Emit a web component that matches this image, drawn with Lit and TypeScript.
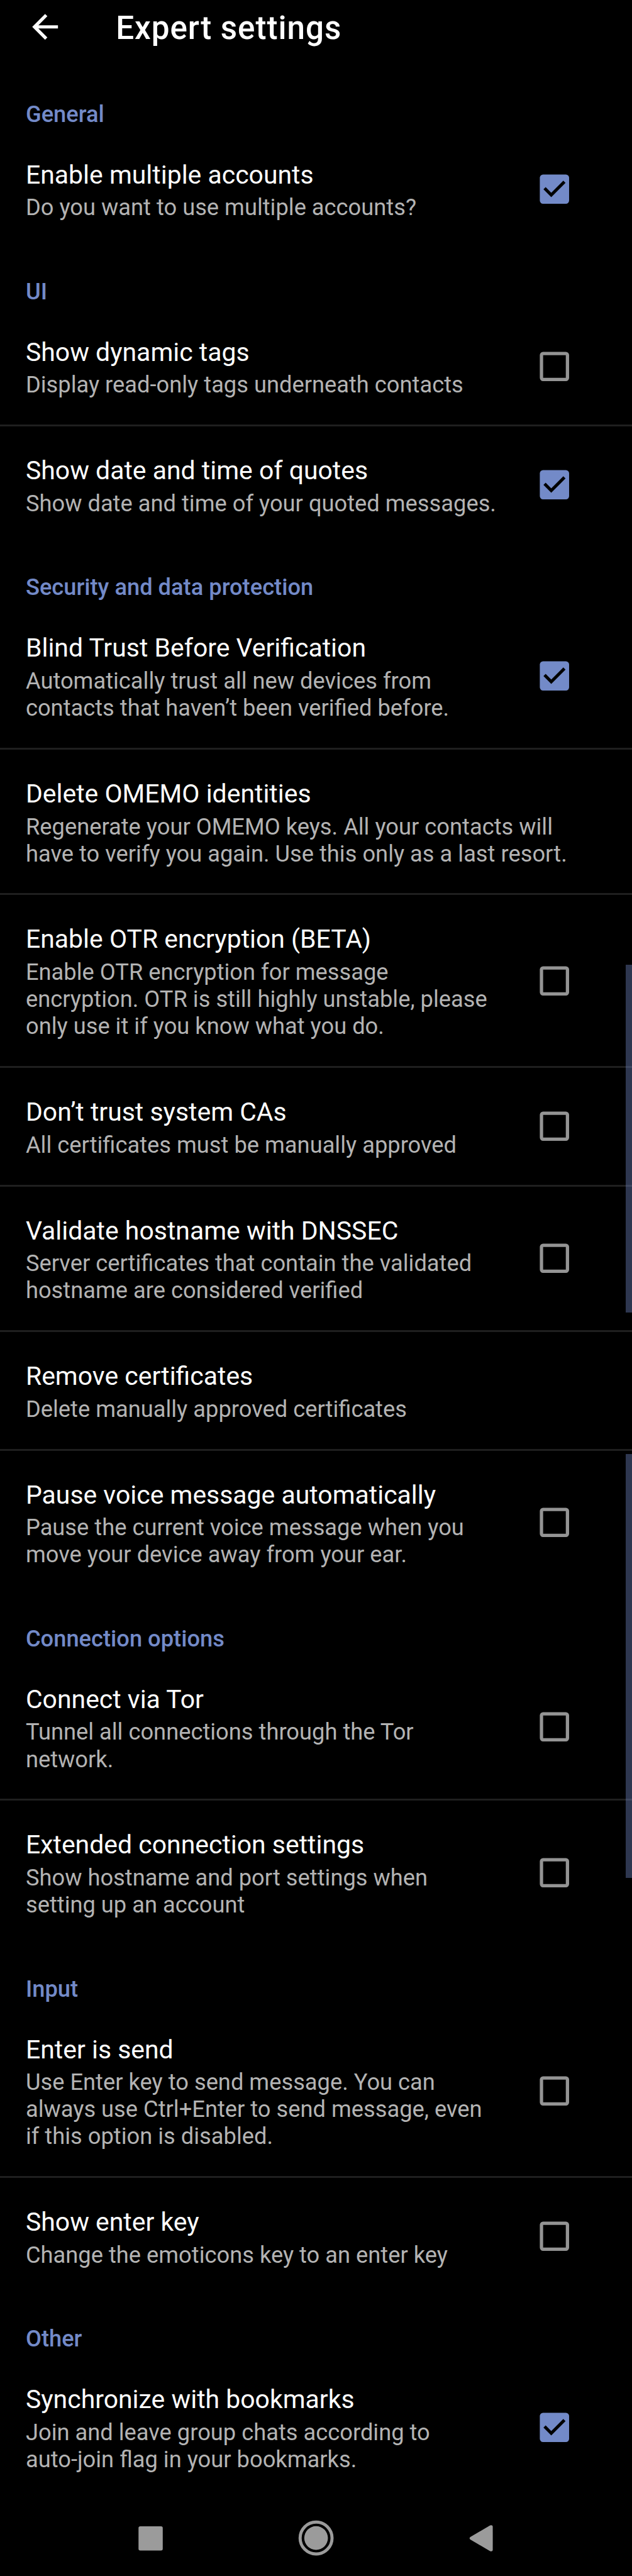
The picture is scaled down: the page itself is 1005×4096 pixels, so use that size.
import { LitElement, html, css, svg, nothing } from "lit";
import { customElement, property } from "lit/decorators.js";

interface Setting {
  title: string;
  summary: string[];
  checked?: boolean;
}

interface Section {
  name: string;
  items: Setting[];
}

const SECTIONS: Section[] = [
  {
    name: "General",
    items: [
      { title: "Enable multiple accounts", summary: ["Do you want to use multiple accounts?"], checked: true },
    ],
  },
  {
    name: "UI",
    items: [
      { title: "Show dynamic tags", summary: ["Display read-only tags underneath contacts"], checked: false },
      { title: "Show date and time of quotes", summary: ["Show date and time of your quoted messages."], checked: true },
    ],
  },
  {
    name: "Security and data protection",
    items: [
      {
        title: "Blind Trust Before Verification",
        summary: ["Automatically trust all new devices from", "contacts that haven’t been verified before."],
        checked: true,
      },
      {
        title: "Delete OMEMO identities",
        summary: ["Regenerate your OMEMO keys. All your contacts will", "have to verify you again. Use this only as a last resort."],
      },
      {
        title: "Enable OTR encryption (BETA)",
        summary: ["Enable OTR encryption for message", "encryption. OTR is still highly unstable, please", "only use it if you know what you do."],
        checked: false,
      },
      { title: "Don’t trust system CAs", summary: ["All certificates must be manually approved"], checked: false },
      {
        title: "Validate hostname with DNSSEC",
        summary: ["Server certificates that contain the validated", "hostname are considered verified"],
        checked: false,
      },
      { title: "Remove certificates", summary: ["Delete manually approved certificates"] },
      {
        title: "Pause voice message automatically",
        summary: ["Pause the current voice message when you", "move your device away from your ear."],
        checked: false,
      },
    ],
  },
  {
    name: "Connection options",
    items: [
      { title: "Connect via Tor", summary: ["Tunnel all connections through the Tor", "network."], checked: false },
      {
        title: "Extended connection settings",
        summary: ["Show hostname and port settings when", "setting up an account"],
        checked: false,
      },
    ],
  },
  {
    name: "Input",
    items: [
      {
        title: "Enter is send",
        summary: ["Use Enter key to send message. You can", "always use Ctrl+Enter to send message, even", "if this option is disabled."],
        checked: false,
      },
      { title: "Show enter key", summary: ["Change the emoticons key to an enter key"], checked: false },
    ],
  },
  {
    name: "Other",
    items: [
      {
        title: "Synchronize with bookmarks",
        summary: ["Join and leave group chats according to", "auto-join flag in your bookmarks."],
        checked: true,
      },
    ],
  },
];

@customElement("setting-checkbox")
export class SettingCheckbox extends LitElement {
  @property({ type: Boolean }) checked = false;

  static styles = css`
    :host {
      display: block;
      flex: none;
    }
    .box {
      display: block;
      width: calc(66 * var(--p));
      height: calc(66 * var(--p));
    }
    .on {
      fill: #738ac8;
    }
    .tick {
      fill: #000;
    }
    .off {
      fill: #949494;
    }
  `;

  render() {
    return html`<svg class="box" viewBox="0 0 24 24" role="checkbox" aria-checked=${this.checked}>
      ${this.checked
        ? svg`<rect class="on" x="2.9" y="2.9" width="18.2" height="18.2" rx="2"></rect>
            <path class="tick" d="M10 17l-4.85-4.85 1.37-1.37L10 14.25l7.5-7.5 1.37 1.37z"></path>`
        : svg`<path class="off" fill-rule="evenodd" d="M4.9 2.9h14.2a2 2 0 0 1 2 2v14.2a2 2 0 0 1-2 2H4.9a2 2 0 0 1-2-2V4.9a2 2 0 0 1 2-2zM4.95 4.95v14.1h14.1V4.95z"></path>`}
    </svg>`;
  }
}

@customElement("app-root")
export class AppRoot extends LitElement {
  static styles = css`
    :host {
      --p: calc(1005px / 1080);
      display: block;
      width: 1005px;
      background: #000;
      font-family: Roboto, sans-serif;
    }
    .screen {
      position: relative;
      box-sizing: border-box;
      height: 4096px;
      display: flex;
      flex-direction: column;
      overflow: hidden;
      background: #000;
    }
    .toolbar {
      flex: none;
      box-sizing: border-box;
      height: calc(119.3 * var(--p));
      padding: 0 calc(44 * var(--p)) calc(28.5 * var(--p));
      display: flex;
      align-items: center;
      gap: calc(88 * var(--p));
    }
    .back {
      display: block;
      width: calc(66 * var(--p));
      height: calc(66 * var(--p));
      fill: #fff;
    }
    .heading {
      margin: 0;
      padding-top: calc(4.5 * var(--p));
      color: #fff;
      font-size: calc(55 * var(--p));
      line-height: calc(64 * var(--p));
      font-weight: 500;
      letter-spacing: 0.0187em;
      white-space: nowrap;
    }
    .list {
      flex: 1;
    }
    .category {
      margin: 0;
      padding: calc(52.2 * var(--p)) calc(44 * var(--p)) calc(2.1 * var(--p));
      color: #738ac8;
      font-size: calc(39 * var(--p));
      line-height: calc(46.3 * var(--p));
      font-weight: 500;
    }
    .row {
      display: flex;
      align-items: center;
      padding: 0 calc(99 * var(--p)) 0 calc(44 * var(--p));
      border-top: 3px solid transparent;
    }
    .divided {
      border-top-color: #1f1f1f;
    }
    .text {
      flex: 1;
      min-width: 0;
      padding: calc(52.6 * var(--p) - 3px) 0 calc(44.9 * var(--p));
    }
    .title {
      color: #fff;
      font-size: calc(44 * var(--p));
      line-height: calc(52 * var(--p));
      white-space: nowrap;
    }
    .summary {
      padding-top: calc(6.8 * var(--p));
      color: #b3b3b3;
      font-size: calc(39 * var(--p));
      line-height: calc(46.3 * var(--p));
      white-space: nowrap;
    }
    .thumb {
      position: absolute;
      right: 0;
      width: calc(11 * var(--p));
      background: rgba(115, 138, 200, 0.4);
    }
    .upper {
      top: calc(1649 * var(--p));
      height: calc(594 * var(--p));
    }
    .lower {
      top: calc(2485 * var(--p));
      height: calc(724 * var(--p));
    }
    .navbar {
      flex: none;
      display: flex;
      align-items: center;
      justify-content: space-between;
      box-sizing: border-box;
      height: calc(132 * var(--p));
      padding: 0 calc(223 * var(--p));
    }
    .key {
      display: block;
      width: calc(68 * var(--p));
      height: calc(68 * var(--p));
      fill: #9b9b9b;
    }
  `;

  private renderSetting(item: Setting, index: number) {
    return html`<div class=${index > 0 ? "row divided" : "row"}>
      <div class="text">
        <div class="title">${item.title}</div>
        <div class="summary">${item.summary.map((line) => html`<div>${line}</div>`)}</div>
      </div>
      ${item.checked === undefined
        ? nothing
        : html`<setting-checkbox ?checked=${item.checked}></setting-checkbox>`}
    </div>`;
  }

  render() {
    return html`<div class="screen">
      <header class="toolbar">
        <svg class="back" viewBox="0 0 24 24">
          <path d="M20 11H7.83l5.59-5.59L12 4l-8 8 8 8 1.41-1.41L7.83 13H20z"></path>
        </svg>
        <h1 class="heading">Expert settings</h1>
      </header>
      <main class="list">
        ${SECTIONS.map(
          (section) => html`<section>
            <h2 class="category">${section.name}</h2>
            ${section.items.map((item, i) => this.renderSetting(item, i))}
          </section>`,
        )}
      </main>
      <nav class="navbar">
        <svg class="key" viewBox="0 0 68 68"><rect x="13.2" y="14" width="41.4" height="41.4" rx="3"></rect></svg>
        <svg class="key" viewBox="0 0 68 68">
          <circle cx="34" cy="34" r="20.2"></circle>
          <circle cx="34" cy="34" r="27.3" fill="none" stroke="#9b9b9b" stroke-width="5.3"></circle>
        </svg>
        <svg class="key" viewBox="0 0 68 68">
          <path d="M14.9 32.2 L48.8 12.4 Q53.3 11 53.3 15 V53.8 Q53.3 57.8 48.8 56.4 L14.9 36.6 Q12.4 34.4 14.9 32.2z"></path>
        </svg>
      </nav>
      <div class="thumb upper"></div>
      <div class="thumb lower"></div>
    </div>`;
  }
}
